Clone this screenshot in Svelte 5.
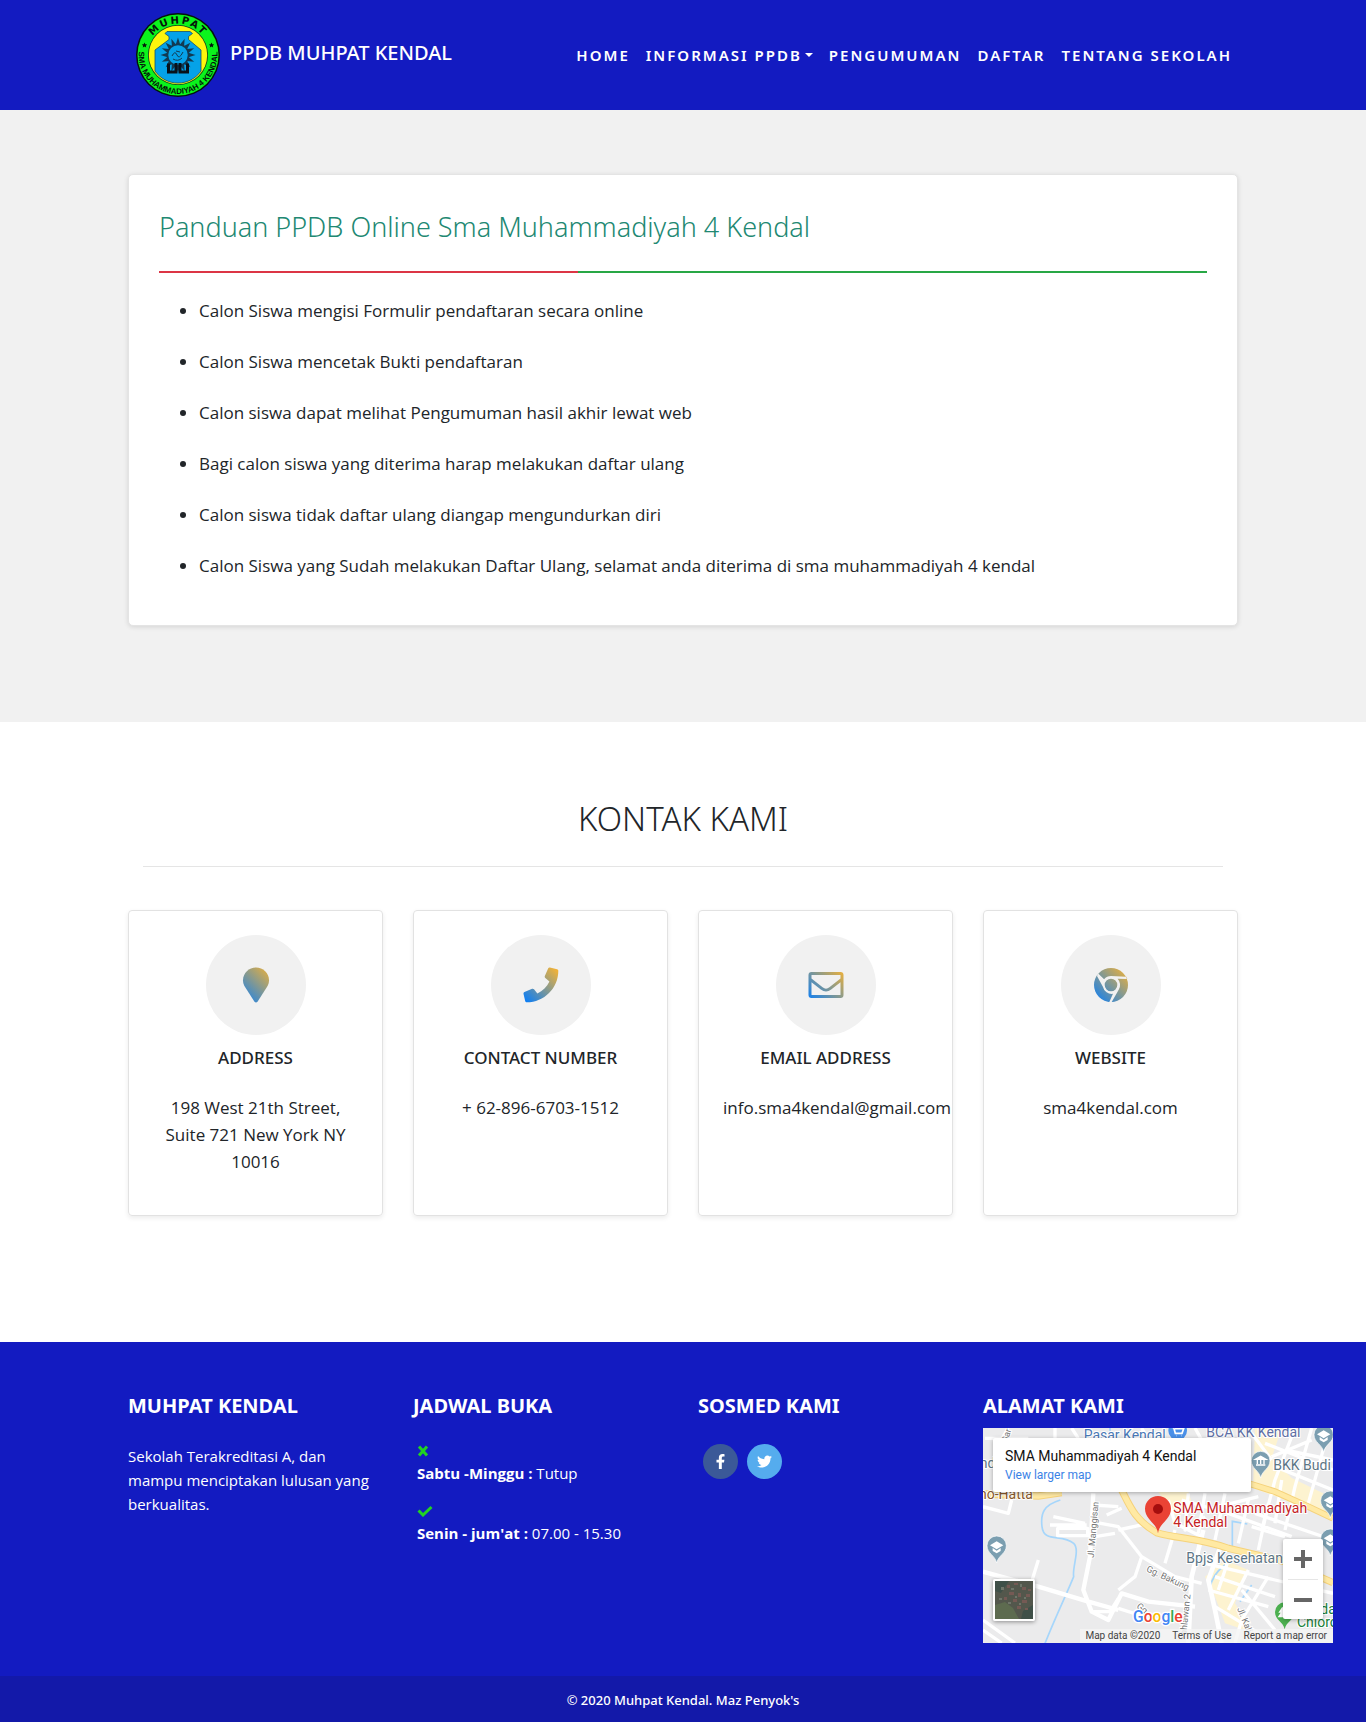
<script>
  const nav = [
    { label: 'Home' },
    { label: 'Informasi PPDB', caret: true },
    { label: 'Pengumuman' },
    { label: 'Daftar' },
    { label: 'Tentang Sekolah' }
  ];

  const guide = [
    'Calon Siswa mengisi Formulir pendaftaran secara online',
    'Calon Siswa mencetak Bukti pendaftaran',
    'Calon siswa dapat melihat Pengumuman hasil akhir lewat web',
    'Bagi calon siswa yang diterima harap melakukan daftar ulang',
    'Calon siswa tidak daftar ulang diangap mengundurkan diri',
    'Calon Siswa yang Sudah melakukan Daftar Ulang, selamat anda diterima di sma muhammadiyah 4 kendal'
  ];

  const contacts = [
    { icon: 'pin', title: 'Address', text: '198 West 21th Street, Suite 721 New York NY 10016', size: 36 },
    { icon: 'phone', title: 'Contact Number', text: '+ 62-896-6703-1512', size: 512 },
    { icon: 'mail', title: 'Email Address', text: 'info.sma4kendal@gmail.com', size: 36 },
    { icon: 'chrome', title: 'Website', text: 'sma4kendal.com', size: 36 }
  ];

  const rays = Array.from({ length: 16 }, (_, i) => i * 22.5);
</script>

<header class="topbar">
  <div class="container bar">
    <a class="brand" href="#home">
      <svg class="logo" viewBox="0 0 84 84" aria-hidden="true">
        <defs>
          <path id="arc-top" d="M10.500 42a31.500 31.500 0 0 1 63 0" />
          <path id="arc-bottom" d="M3 36a39.400 39.400 0 1 0 78 0" />
        </defs>
        <circle cx="42" cy="42" r="42" fill="#04140a" />
        <circle cx="42" cy="42" r="40.500" fill="#0bf41c" />
        <circle cx="42" cy="42" r="30" fill="#123c1c" />
        <circle cx="42" cy="42" r="29.200" fill="#fdf50c" />
        <path d="M31 18.500h23l2.500 2-4 3v3L65 37V58a28 28 0 0 1-46 0V37L33 26.500v-3l-4-3z" fill="#05a2e8" stroke="#16506b" stroke-width=".8" />
        <g fill="#123a52">
          {#each rays as r}
            <path d="M39.800 31.500L42 24.500l2.200 7z" transform="rotate({r} 42 42)" />
          {/each}
        </g>
        <circle cx="42" cy="42" r="10.500" fill="#05a2e8" stroke="#123a52" stroke-width="1.500" />
        <path d="M36 43q3-6 5-1t6-3M37 46q5 3 9-1M40 38l4 1" fill="none" stroke="#123a52" />
        <path d="M32.500 50.500v8.500h7.500v-9M51.500 50.500v8.500h-7.500v-9" fill="none" stroke="#08111a" stroke-width="3" />
        <text class="seal-top"><textPath href="#arc-top" startOffset="50%" text-anchor="middle">MUHPAT</textPath></text>
        <text class="seal-bottom"><textPath href="#arc-bottom" startOffset="50%" text-anchor="middle">SMA MUHAMMADIYAH 4 KENDAL</textPath></text>
        <path d="M8.500 29.500l.8 1.700 1.900.2-1.400 1.300.4 1.900-1.700-1-1.700 1 .4-1.900-1.400-1.300 1.900-.2zM75.500 29.500l.8 1.700 1.900.2-1.400 1.300.4 1.900-1.700-1-1.700 1 .4-1.900-1.400-1.300 1.900-.2z" fill="#04140a" />
      </svg>
      <span>PPDB MUHPAT KENDAL</span>
    </a>
    <nav>
      {#each nav as item}
        <a href="#menu">{item.label}{#if item.caret}<i class="caret"></i>{/if}</a>
      {/each}
    </nav>
  </div>
</header>

<main>
  <section class="guide">
    <div class="container">
      <article class="panel">
        <h1>Panduan PPDB Online Sma Muhammadiyah 4 Kendal</h1>
        <div class="rule"></div>
        <ul>
          {#each guide as line}<li>{line}</li>{/each}
        </ul>
      </article>
    </div>
  </section>

  <section class="contact">
    <div class="container">
      <h2>KONTAK KAMI</h2>
      <hr />
      <div class="cards">
        {#each contacts as c}
          <article class="card">
            <div class="disc">
              <svg viewBox="0 0 36 36" aria-hidden="true">
                <defs>
                  <linearGradient id="tint-{c.icon}" gradientUnits="userSpaceOnUse" x1="0" y1={c.size} x2={c.size} y2="0">
                    <stop offset="0" stop-color="#007bff" />
                    <stop offset="1" stop-color="#ffb52b" />
                  </linearGradient>
                </defs>
                <g fill="url(#tint-{c.icon})">
                  {#if c.icon === 'pin'}
                    <path d="M18 .5C11 .5 5 6 5 13.200c0 2.500.7 4.600 1.900 6.600L16.500 34.700q1.500 1.600 3 0L29.100 19.800C30.300 17.800 31 15.700 31 13.200 31 6 25 .5 18 .5z" />
                  {:else if c.icon === 'phone'}
                    <path transform="translate(.5 .5) scale(.068)" d="M493.400 24.600l-104-24c-11.300-2.600-22.900 3.300-27.500 13.900l-48 112c-4.200 9.800-1.400 21.300 6.900 28l60.600 49.600c-36 76.700-98.900 140.500-177.200 177.200l-49.600-60.600c-6.800-8.300-18.200-11.100-28-6.900l-112 48C3.900 366.500-2 378.100.6 389.400l24 104C27.100 504.200 36.700 512 48 512c256.100 0 464-207.500 464-464 0-11.200-7.700-20.900-18.600-23.400z" />
                  {:else if c.icon === 'mail'}
                    <path fill-rule="evenodd" d="M3.500 5h29a3 3 0 0 1 3 3v20a3 3 0 0 1-3 3h-29a3 3 0 0 1-3-3V8a3 3 0 0 1 3-3zM3.500 8v3.500L14.600 20.300q3.400 2.700 6.800 0L32.500 11.500V8zM3.500 15.300V28h29V15.300L23.200 22.600q-5.200 4-10.400 0z" />
                  {:else}
                    <path fill-rule="evenodd" d="M18 1a17 17 0 1 1 0 34 17 17 0 0 1 0-34zM18 9a9 9 0 0 0-6.900 3.200L5.400 6.800 4 8.900 9.900 19.800A9 9 0 0 0 20 26.800L16.300 34.900l2.400.1 7-12.300A9 9 0 0 0 24.600 11.700L34.300 12l-1-2.200zM18 11.700a6.300 6.300 0 1 1 0 12.600 6.300 6.300 0 0 1 0-12.600z" />
                  {/if}
                </g>
              </svg>
            </div>
            <h3>{c.title}</h3>
            <p>{c.text}</p>
          </article>
        {/each}
      </div>
    </div>
  </section>
</main>

<footer>
  <div class="container columns">
    <section>
      <h4>MUHPAT KENDAL</h4>
      <p class="about">Sekolah Terakreditasi A, dan mampu menciptakan lulusan yang berkualitas.</p>
    </section>
    <section>
      <h4>JADWAL BUKA</h4>
      <ul class="hours">
        <li>
          <svg viewBox="0 0 16 12" aria-hidden="true"><path d="M2 1.500l8 9M10 1.500l-8 9" /></svg>
          <strong>Sabtu -Minggu :</strong> Tutup
        </li>
        <li>
          <svg viewBox="0 0 16 12" aria-hidden="true"><path d="M1.500 5.500l4.500 4.500L14.500 2" /></svg>
          <strong>Senin - jum'at :</strong> 07.00 - 15.30
        </li>
      </ul>
    </section>
    <section>
      <h4>SOSMED KAMI</h4>
      <div class="social">
        <a class="fb" href="#facebook" aria-label="Facebook">
          <svg viewBox="0 0 320 512"><path d="M279.140 288l14.220-92.660h-88.910v-60.130c0-25.350 12.420-50.060 52.240-50.060h40.420V6.260S260.430 0 225.360 0c-73.220 0-121.080 44.380-121.080 124.720v70.620H22.890V288h81.390v224h100.170V288z" /></svg>
        </a>
        <a class="tw" href="#twitter" aria-label="Twitter">
          <svg viewBox="0 0 512 512"><path d="M459.370 151.716c.325 4.548.325 9.097.325 13.645 0 138.720-105.583 298.558-298.558 298.558-59.452 0-114.680-17.219-161.137-47.106 8.447.974 16.568 1.299 25.340 1.299 49.055 0 94.213-16.568 130.274-44.832-46.132-.975-84.792-31.188-98.112-72.772 6.498.974 12.995 1.624 19.818 1.624 9.421 0 18.843-1.300 27.614-3.573-48.081-9.747-84.143-51.980-84.143-102.985v-1.299c13.969 7.797 30.214 12.670 47.431 13.319-28.264-18.843-46.781-51.005-46.781-87.391 0-19.492 5.197-37.360 14.294-52.954 51.655 63.675 129.300 105.258 216.365 109.807-1.624-7.797-2.599-15.918-2.599-24.040 0-57.828 46.782-104.934 104.934-104.934 30.213 0 57.502 12.670 76.670 33.137 23.715-4.548 46.456-13.320 66.599-25.340-7.798 24.366-24.366 44.833-46.132 57.827 21.117-2.273 41.584-8.122 60.426-16.243-14.292 20.791-32.161 39.308-52.628 54.253z" /></svg>
        </a>
      </div>
    </section>
    <section>
      <h4>ALAMAT KAMI</h4>
      <div class="map">
        <svg class="tiles" viewBox="24 114 1050 645" aria-hidden="true">
          <defs>
            <g id="school">
              <path d="M0 40C-5 16-29 12-29-12a29 29 0 0 1 58 0C29 12 5 16 0 40z" fill="#7b9eb0" stroke="#fff" stroke-width="2" />
              <path d="M-20-13L0-25l20 12L0-1zM-12-5v9L0 11l12-7v-9L0 3z" fill="#fff" />
            </g>
          </defs>
          <rect x="24" y="114" width="1050" height="645" fill="#ebebec" />
          <g fill="#fdf3d0">
            <path d="M840 114h80l-30 90 60 60 124 60v60l-240-90z" />
            <path d="M550 306h90l20 60-60 10zM690 560l60-50 70 30-40 100 60 90-90-30-30-80z" />
          </g>
          <g fill="none" stroke="#a6d6fb" stroke-width="5">
            <path d="M256 330c-50 15-60 40-55 80 5 50 60 20 95 50 20 20-5 70 0 100-20 50-50 110-86 200" />
            <path d="M772 470v-76l45 8M750 525q-40 30-45 70M830 585l-35 50M405 114v30" />
          </g>
          <g fill="none" stroke="#fff" stroke-width="10" stroke-linejoin="round">
            <path d="M24 545L190 590 330 632 430 660M355 310L345 500 325 600 350 665 400 690 440 610 520 635 660 650" stroke-width="13" />
            <path d="M235 380L330 400M225 405h110M248 415h90v22h-90zM24 350L100 370 110 330M190 510L150 640" />
            <path d="M355 345L430 350M350 395L430 410 500 500 480 560 430 600M360 440L420 430M500 500L600 560 680 580" />
            <path d="M355 665h50l25-40M430 655L540 690 650 680M520 400L430 420M600 420L570 520M440 355L395 375" />
            <path d="M685 420L650 560 640 759M740 460L700 570 720 660 740 759" stroke-width="14" />
            <path d="M580 330L600 400 680 440M640 310L630 420 690 380M620 330L760 370 950 440M690 310L670 430M750 310L720 450M820 330L790 460M880 340L850 480M730 350L850 320" />
            <path d="M960 114L900 270 860 420M1010 114L960 290 930 420M1050 160L1000 340M870 160L1074 240M900 230L1074 300M890 200L1010 150M930 180L1074 210M830 130L890 210M920 270L900 400" />
            <path d="M840 370L1074 450M830 410L930 440M690 520L900 570 1074 610M720 560L900 620M700 600L880 650M760 510L730 600M820 540L760 660M880 560L800 690 780 759M720 650L900 759M800 600L900 720M24 690L120 759M24 720L80 759" />
            <path d="M30 145h130M100 114L60 180M290 114L310 145M240 114v40M500 114L520 150M660 114L680 150" />
          </g>
          <g fill="none">
            <path d="M24 312L190 318 260 308M440 300C465 350 480 390 545 428 600 445 680 445 760 475L930 515 1074 578" stroke="#f5d27a" stroke-width="22" />
            <path d="M24 312L190 318 260 308M440 300C465 350 480 390 545 428 600 445 680 445 760 475L930 515 1074 578" stroke="#ffe9a3" stroke-width="16" />
            <path d="M820 280L900 305 1000 350 1074 385" stroke="#f5d27a" stroke-width="20" />
            <path d="M820 280L900 305 1000 350 1074 385" stroke="#ffe9a3" stroke-width="14" />
          </g>
          <g class="roads">
            <text transform="translate(356 504) rotate(-85)">Jl. Manggisan</text>
            <text transform="translate(512 543) rotate(25)">Gg. Bakung</text>
            <text transform="translate(483 652) rotate(38)">Gg. A</text>
            <text transform="translate(634 735) rotate(-84)">ahlawan 2</text>
            <text transform="translate(786 656) rotate(68)">Jl. Kali</text>
            <text transform="translate(96 160) rotate(-72)">Gar</text>
          </g>
          <g class="places">
            <text x="326" y="149" fill="#4a78b5">Pasar Kendal</text>
            <text x="694" y="140" fill="#5f6fa5">BCA KK Kendal</text>
            <text x="895" y="240" fill="#5c7585">BKK Budi</text>
            <text x="634" y="518" fill="#5c7585">Bpjs Kesehatan</text>
            <text x="14" y="235" fill="#5c7585">nd</text>
            <text x="12" y="328" fill="#8a5a2b">no-Hatta</text>
            <text x="1036" y="672" fill="#188038">da</text>
            <text x="966" y="712" fill="#188038">Chloro</text>
            <text x="595" y="370" fill="#c5221f">SMA Muhammadiyah</text>
            <text x="595" y="411" fill="#c5221f">4 Kendal</text>
          </g>
          <circle cx="608" cy="122" r="28" fill="#4a90e8" />
          <path d="M590 112h6l5 18h20l5-14h-26M604 137h1M619 137h1" fill="none" stroke="#fff" stroke-width="5" />
          <use href="#school" x="1046" y="146" />
          <use href="#school" x="65" y="479" />
          <use href="#school" x="1066" y="344" />
          <use href="#school" x="1066" y="458" />
          <path d="M857 264c-5-24-28-28-28-52a28 28 0 0 1 56 0c0 24-23 28-28 52z" fill="#7b9eb0" stroke="#fff" stroke-width="2" />
          <path d="M841 208l16-9 16 9zM843 225h28M847 210v12M857 210v12M867 210v12" fill="#fff" stroke="#fff" stroke-width="4" />
          <path d="M929 718c-5-24-29-28-29-52a29 29 0 0 1 58 0c0 24-24 28-29 52z" fill="#4cb050" />
          <path d="M922 650l12 18h-7l9 14h-28l9-14h-7z" fill="#fff" />
          <path d="M549 430c-3-30-39-42-39-74a39 38 0 0 1 78 0c0 32-36 44-39 74z" fill="#ea4335" />
          <circle cx="549" cy="357" r="15" fill="#a50e0e" />
          <text class="google" x="474" y="697"><tspan fill="#4285f4">G</tspan><tspan fill="#ea4335">o</tspan><tspan fill="#fbbc04">o</tspan><tspan fill="#4285f4">g</tspan><tspan fill="#34a853">l</tspan><tspan fill="#ea4335">e</tspan></text>
        </svg>
        <div class="place">
          <b>SMA Muhammadiyah 4 Kendal</b>
          <a href="#map">View larger map</a>
        </div>
        <button class="satellite" aria-label="Satellite view">
          <svg viewBox="0 0 38 38">
            <rect width="38" height="38" fill="#53574c" />
            <path d="M0 24l10-3 8 6 6 11H0z" fill="#5d6b4f" />
            <path d="M0 0h14L6 12 0 10zM28 30l10-6v14H26z" fill="#3f5048" />
            <path d="M12 4h3v3h-3zM19 2h4v2h-4zM27 6h4v3h-4zM14 11h5v3h-5zM23 12h3v4h-3zM31 13h4v3h-4zM9 16h3v3H9zM18 18h4v3h-4zM27 19h5v3h-5zM22 25h4v3h-4zM33 8h3v2h-3zM30 27h3v2h-3z" fill="#755a54" />
            <path d="M16 7h3v2h-3zM25 3h2v3h-2zM20 15h2v2h-2zM29 16h2v2h-2zM13 21h3v2h-3zM24 22h2v2h-2zM6 6h3v3H6zM4 17h3v2H4z" fill="#6f766a" />
          </svg>
        </button>
        <div class="zoom">
          <button aria-label="Zoom in"><svg viewBox="0 0 18 18"><path d="M9 0v18M0 9h18" /></svg></button>
          <button aria-label="Zoom out"><svg viewBox="0 0 18 18"><path d="M0 9h18" /></svg></button>
        </div>
        <div class="credits">
          <span>Map data ©2020</span>
          <a href="#terms">Terms of Use</a>
          <a href="#report">Report a map error</a>
        </div>
      </div>
    </section>
  </div>
  <div class="copyright">© 2020 Muhpat Kendal. Maz Penyok's</div>
</footer>

<style>
  :global(body) {
    margin: 0;
    overflow-x: hidden;
    background: #fff;
    color: #212529;
    font-family: "Noto Sans", "Open Sans", sans-serif;
  }
  :global(*) { box-sizing: border-box; }
  h1, h2, h3, h4, p, ul { margin: 0; padding: 0; }
  a { color: inherit; text-decoration: none; }
  button { border: 0; padding: 0; background: none; cursor: pointer; }
  svg { display: block; }

  .container { max-width: 1140px; margin: 0 auto; padding: 0 15px; }

  .topbar { background: #131bc1; color: #fff; }
  .bar { display: flex; align-items: center; justify-content: space-between; min-height: 110px; }
  .brand { display: flex; align-items: center; gap: 10px; padding-left: 8px; font-size: 20px; font-weight: 500; line-height: 24px; }
  .brand span { padding-bottom: 4px; }
  .logo { width: 84px; height: 84px; }
  .seal-top { font: 700 10px "DejaVu Sans", sans-serif; letter-spacing: 2px; fill: #04140a; }
  .seal-bottom { font: 700 8px "Liberation Sans", sans-serif; fill: #04140a; }
  nav { display: flex; }
  nav a { padding: 8px; font-size: 15px; font-weight: 600; line-height: 24px; letter-spacing: 2px; text-transform: uppercase; white-space: nowrap; }
  nav a:last-child { padding-right: 6px; }
  .caret { display: inline-block; margin-left: 3px; vertical-align: 4px; border: 4px solid transparent; border-top-color: #fff; border-bottom: 0; }

  .guide { background: #f1f1f1; padding: 64px 0 96px; }
  .panel { padding: 35px 30px 46px; border: 1px solid #e4e4e4; border-radius: 5px; background: #fff; box-shadow: 0 1px 5px rgba(0, 0, 0, .12); }
  h1 { font-size: 27px; font-weight: 300; line-height: 34px; color: #218872; }
  .rule { height: 2px; margin: 27px 0 24px; background: linear-gradient(90deg, #dc3545 40%, #28a745 40%); }
  .panel ul, .card p { font-family: "Open Sans", sans-serif; font-size: 17px; line-height: 27px; }
  .panel ul { display: grid; gap: 24px; padding-left: 40px; }

  .contact { padding: 77px 0 126px; }
  h2 { font-size: 33px; font-weight: 300; line-height: 40px; text-align: center; }
  hr { height: 1px; margin: 27px 15px 43px; border: 0; background: #e5e5e5; }
  .cards, .columns { display: grid; grid-template-columns: repeat(4, minmax(0, 1fr)); gap: 30px; }
  .card { padding: 24px 24px 40px; border: 1px solid #e2e2e2; border-radius: 4px; text-align: center; box-shadow: 0 2px 5px rgba(0, 0, 0, .08); }
  .disc { display: grid; place-items: center; width: 100px; height: 100px; margin: 0 auto 11px; border-radius: 50%; background: #f1f1f1; }
  .disc svg { width: 36px; height: 36px; }
  h3 { margin-bottom: 24px; font-size: 17px; font-weight: 500; line-height: 24px; text-transform: uppercase; white-space: nowrap; }

  footer { background: #131bc1; color: #fff; }
  .columns { padding-top: 52px; padding-bottom: 33px; }
  h4 { font-size: 20px; font-weight: 700; line-height: 24px; }
  .about, .hours { font-family: "Open Sans", sans-serif; font-size: 15px; }
  .about { margin-top: 26px; line-height: 24px; }
  .hours { display: grid; gap: 14px; margin-top: 21px; padding-left: 4px; list-style: none; line-height: 23px; }
  .hours svg { width: 16px; height: 12px; margin: 6px 0 5px; }
  .hours path { fill: none; stroke: #22d222; stroke-width: 3; }
  .social { display: flex; gap: 9px; margin-top: 26px; padding-left: 5px; }
  .social a { display: grid; place-items: center; width: 35px; height: 35px; border-radius: 50%; }
  .social svg { width: 15px; height: 15px; fill: #fff; }
  .fb { background: #3b5998; }
  .tw { background: #55acee; }

  .map { position: relative; width: 350px; height: 215px; margin-top: 10px; overflow: hidden; font-family: Roboto, sans-serif; }
  .tiles { width: 100%; height: 100%; }
  .tiles text { paint-order: stroke; stroke: #fff; stroke-width: 6px; }
  .places { font-size: 42px; }
  .roads { font-size: 27px; fill: #757575; }
  .tiles .google { font-size: 47px; font-weight: 500; stroke-width: 8px; }
  .place { position: absolute; top: 10px; left: 10px; width: 258px; height: 54px; padding: 9px 12px; border-radius: 2px; background: #fff; color: #111; box-shadow: 0 1px 4px rgba(0, 0, 0, .3); }
  .place b { display: block; font-size: 14px; font-weight: 400; line-height: 19px; }
  .place a { display: block; color: #3b82e6; font-size: 12px; line-height: 18px; }
  .satellite { position: absolute; left: 10px; bottom: 22px; width: 42px; height: 42px; border: 2px solid #fff; border-radius: 2px; box-shadow: 0 1px 4px rgba(0, 0, 0, .4); }
  .zoom { position: absolute; right: 10px; bottom: 24px; width: 40px; border-radius: 2px; background: #fff; box-shadow: 0 1px 4px rgba(0, 0, 0, .3); }
  .zoom button { display: grid; place-items: center; width: 30px; height: 40px; margin: 0 5px; }
  .zoom button + button { border-top: 1px solid #e6e6e6; }
  .zoom svg { width: 18px; height: 18px; }
  .zoom path { stroke: #666; stroke-width: 4; }
  .credits { position: absolute; right: 0; bottom: 0; display: flex; gap: 12px; padding: 0 6px 0 5px; background: rgba(245, 245, 245, .8); color: #444; font-size: 10px; line-height: 14px; white-space: nowrap; }

  .copyright { padding: 14px 15px 12px; background: #1319a9; text-align: center; font-size: 13px; font-weight: 500; line-height: 20px; }
</style>
